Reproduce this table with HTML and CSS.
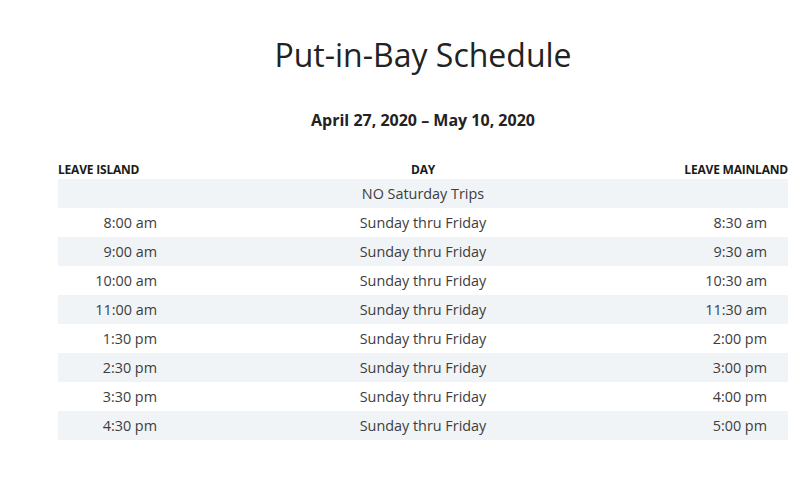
FILE: index.html
```html
<!DOCTYPE html>
<html>
<head>
<meta charset="utf-8">
<link rel="stylesheet" href="styles.css">
</head>
<body>
<div class="page">
  <h1 class="title">Put-in-Bay Schedule</h1>
  <h2 class="dates">April 27, 2020 – May 10, 2020</h2>
  <div class="table">
    <div class="row head">
      <div class="c1">LEAVE ISLAND</div>
      <div class="c2">DAY</div>
      <div class="c3">LEAVE MAINLAND</div>
    </div>
    <div class="row alt">
      <div class="c1"></div>
      <div class="c2">NO Saturday Trips</div>
      <div class="c3"></div>
    </div>
    <div class="row"><div class="c1">8:00 am</div><div class="c2">Sunday thru Friday</div><div class="c3">8:30 am</div></div>
    <div class="row alt"><div class="c1">9:00 am</div><div class="c2">Sunday thru Friday</div><div class="c3">9:30 am</div></div>
    <div class="row"><div class="c1">10:00 am</div><div class="c2">Sunday thru Friday</div><div class="c3">10:30 am</div></div>
    <div class="row alt"><div class="c1">11:00 am</div><div class="c2">Sunday thru Friday</div><div class="c3">11:30 am</div></div>
    <div class="row"><div class="c1">1:30 pm</div><div class="c2">Sunday thru Friday</div><div class="c3">2:00 pm</div></div>
    <div class="row alt"><div class="c1">2:30 pm</div><div class="c2">Sunday thru Friday</div><div class="c3">3:00 pm</div></div>
    <div class="row"><div class="c1">3:30 pm</div><div class="c2">Sunday thru Friday</div><div class="c3">4:00 pm</div></div>
    <div class="row alt"><div class="c1">4:30 pm</div><div class="c2">Sunday thru Friday</div><div class="c3">5:00 pm</div></div>
  </div>
</div>
</body>
</html>
```

FILE: styles.css
```css
html, body {
  margin: 0;
  padding: 0;
  background: #fff;
}
body {
  font-family: "Open Sans", "Liberation Sans", sans-serif;
  color: #3d3d3d;
}
.page {
  width: 730px;
  margin-left: 58px;
  padding-top: 33px;
}
.title {
  margin: 0;
  text-align: center;
  font-size: 32px;
  font-weight: 400;
  line-height: 44px;
  color: #222;
}
.dates {
  margin: 32px 0 0;
  text-align: center;
  font-size: 16px;
  font-weight: 700;
  line-height: 22px;
  color: #222;
}
.table {
  margin-top: 28px;
}
.row {
  display: grid;
  grid-template-columns: 120px 1fr 120px;
  height: 29px;
  align-items: center;
  font-size: 14.4px;
}
.row.alt {
  background: #f0f4f6;
}
.c1 {
  text-align: right;
  padding-right: 21px;
}
.c2 {
  text-align: center;
}
.c3 {
  text-align: right;
  padding-right: 21px;
}
.row.head {
  height: 20px;
  align-items: center;
  font-size: 12px;
  font-weight: 700;
  color: #1a1a1a;
  letter-spacing: -0.2px;
}
.row.head .c1 {
  text-align: left;
  padding-right: 0;
}
.row.head .c3 {
  padding-right: 0;
  white-space: nowrap;
}
```
